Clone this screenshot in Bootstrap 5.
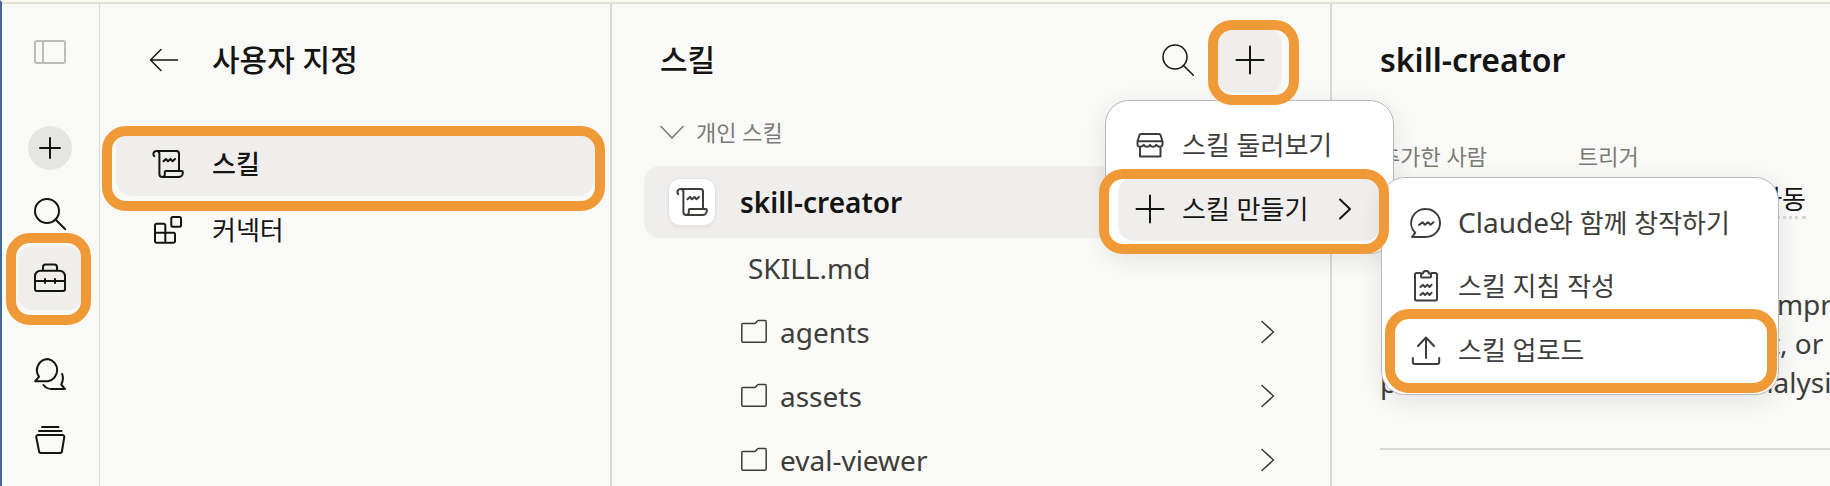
<!DOCTYPE html>
<html lang="ko">
<head>
<meta charset="utf-8">
<meta name="viewport" content="width=device-width, initial-scale=1">
<title>스킬 - 사용자 지정</title>
<link href="https://cdn.jsdelivr.net/npm/bootstrap@5.3.0/dist/css/bootstrap.min.css" rel="stylesheet">
<style>
  :root { --ink:#141413; --ink-soft:#3d3d3a; --ink-mute:#7b7a74; --line:#d8d8d6; --tint:#efeeec; --mark:#f09937; }
  body { font-family:"Noto Sans","Noto Sans CJK KR",sans-serif; font-size:26px; line-height:40px; color:var(--ink);
         background:#f9f9f7; overflow:hidden; }
  .app { border-left:2px solid #41699a; border-top:2px solid #f7f9ef; }
  .frame { border-top:2px solid #dfe3d8; min-height:0; }
  .glyph { width:32px; height:32px; fill:none; stroke:currentColor; stroke-width:2; stroke-linecap:round; stroke-linejoin:round; flex:none; display:block; }
  .thin { stroke-width:1.5; }
  button { font:inherit; color:inherit; }
  .plain { border:0; background:none; padding:0; }
  .latin { font-size:28px; }

  .rail { width:98px; border-right:1px solid var(--line); background:#f9faf6; padding:16px 1px 0 0; }
  .tile { width:64px; height:64px; border-radius:14px; position:relative; }
  .tile.on { background:var(--tint); }
  .disc { width:44px; height:44px; border-radius:50%; background:#e5e6e1; }
  .faint { color:#bcbcb8; }
  .break-lg { margin-top:32px; }
  .break-sm { margin-top:2px; }

  .settings { width:512px; border-right:2px solid var(--line); padding:0 16px; }
  .bar { height:112px; }
  .headline { font-size:30px; line-height:40px; font-weight:500; margin:0; }
  .headline.latin { font-size:32px; font-weight:600; }
  .entries { gap:2px; }
  .entry { height:64px; border-radius:16px; padding:0 36px; gap:28px; position:relative; color:var(--ink); text-decoration:none; }
  .entry.on { background:var(--tint); font-weight:500; }

  .skills { width:720px; border-right:2px solid var(--line); padding:0 32px; }
  .skills .bar { padding:0 16px; }
  .group { height:32px; padding:0 16px; gap:12px; font-size:22px; color:var(--ink-mute); margin-bottom:18px; }
  .group .glyph { width:24px; }
  .picked { height:72px; border-radius:16px; background:var(--tint); padding:0 24px; gap:24px; font-weight:600; }
  .chip { width:48px; height:48px; border-radius:12px; background:#fff; border:1px solid #e3e2df; box-shadow:0 2px 4px rgba(0,0,0,.05); color:var(--ink-soft); }
  .node { height:60px; padding:0 14px 0 96px; gap:12px; color:var(--ink-soft); }
  .node .folder { width:28px; height:28px; }
  .leaf { padding-left:104px; }

  .detail { padding:0 0 0 48px; min-width:0; }
  .meta { gap:16px; font-size:22px; line-height:32px; color:var(--ink-mute); white-space:nowrap; padding-top:24px; height:144px; }
  .meta dt { font-weight:400; width:182px; }
  .meta .wide { width:228px; }
  .meta dd { font-size:26px; line-height:34px; color:var(--ink); margin:10px 0 0; text-align:right; }
  .dotted { border-bottom:3px dotted var(--line); display:inline-block; }
  .about { line-height:39px; color:var(--ink-soft); white-space:nowrap; margin:0; padding:25px 0 46px; overflow:hidden; }
  .rule { height:2px; background:var(--line); }

  .pop { position:absolute; background:#fff; border:1px solid #b9b9b7; border-radius:24px; padding:12px; box-shadow:0 6px 24px rgba(0,0,0,.09); color:var(--ink-soft); font-size:26px; font-weight:400; margin:0; list-style:none; }
  .pop-main { top:72px; right:-112px; width:289px; z-index:10; }
  .pop-sub { top:0; left:263px; width:398px; z-index:11; }
  .choice { height:64px; width:100%; border-radius:16px; padding:0 16px; gap:16px; white-space:nowrap; }
  .choice.on { background:var(--tint); color:var(--ink); }

  /* orange markers laid over the steps to follow */
  .ring { position:absolute; border:10px solid var(--mark); border-radius:24px; pointer-events:none; z-index:20; }
  .ring-rail { inset:-13px -9px -15px -12px; }
  .ring-entry { inset:-6px -11px -15px -14px; }
  .ring-add { inset:-8px -17px -13px -10px; }
  .ring-make { inset:-8px -8px -13px -19px; }
  .ring-upload { inset:-9px -11px -11px -9px; }
</style>
</head>
<body>
<svg width="0" height="0" class="position-absolute" aria-hidden="true">
  <symbol id="scroll" viewBox="0 0 32 32"><path d="M2.200 8.200C.4 5.800 1.800 3 4.600 3H24.500a2.500 2.500 0 0 1 2.500 2.500V23M4.600 3C6.300 3 7.400 4.300 7.400 6V26a3 3 0 0 0 3 3H26.500a4.300 4.300 0 0 0 4.300-4.300V24a1 1 0 0 0-1-1H13.800a1 1 0 0 0-1 1V26.300c0 1.500-.9 2.700-2.400 2.700M11.500 13.300l2.500-2.300 2 2.300 2.500-2.300 2 2.300 2.500-2.300"/></symbol>
  <symbol id="search" viewBox="0 0 32 32"><circle cx="13" cy="13" r="12"/><path d="M21.500 21.500L31.300 31.200"/></symbol>
  <symbol id="plus" viewBox="0 0 32 32"><path d="M16 2.500v27M2.500 16h27"/></symbol>
  <symbol id="folder" viewBox="0 0 28 28"><path d="M3 5.500H14.500C16.500 5.500 16.500 2.500 18.500 2.500H25a1.200 1.200 0 0 1 1.200 1.200V23a1.200 1.200 0 0 1-1.200 1.200H3A1.200 1.200 0 0 1 1.800 23V6.700A1.200 1.200 0 0 1 3 5.500z"/></symbol>
  <symbol id="next" viewBox="0 0 32 32"><path d="M10 5.500L21.500 16 10 26.500"/></symbol>
</svg>

<div class="app d-flex flex-column vh-100">
<div class="frame d-flex flex-grow-1">
  <nav class="rail d-flex flex-column align-items-center flex-shrink-0" aria-label="주 메뉴">
    <button class="plain tile faint d-flex align-items-center justify-content-center" aria-label="사이드바"><svg class="glyph" viewBox="0 0 32 32"><path d="M3 5H29a2 2 0 0 1 2 2V25a2 2 0 0 1-2 2H3a2 2 0 0 1-2-2V7a2 2 0 0 1 2-2zM9 5V27"/></svg></button>
    <button class="plain tile break-lg d-flex align-items-center justify-content-center" aria-label="새로 만들기"><span class="disc d-flex align-items-center justify-content-center"><svg class="glyph" viewBox="0 0 32 32"><path d="M16 6v20M6 16h20"/></svg></span></button>
    <button class="plain tile break-sm d-flex align-items-center justify-content-center" aria-label="검색"><svg class="glyph"><use href="#search"/></svg></button>
    <button class="plain tile on d-flex align-items-center justify-content-center" aria-label="사용자 지정"><svg class="glyph" viewBox="0 0 32 32"><path d="M9 8.500V5a2.500 2.500 0 0 1 2.500-2.500h9A2.500 2.500 0 0 1 23 5V8.500M6.500 8.700h19A5.500 5.500 0 0 1 31 14.200V27a2 2 0 0 1-2 2H3a2 2 0 0 1-2-2V14.200A5.500 5.500 0 0 1 6.500 8.700zM1 19H31M11 17v4M21 17v4"/></svg><span class="ring ring-rail"></span></button>
    <button class="plain tile break-lg d-flex align-items-center justify-content-center" aria-label="채팅"><svg class="glyph" viewBox="0 0 32 32"><path d="M14 1A11.300 11.300 0 0 1 14 23.200H1.200L5 18.800A11.300 11.300 0 0 1 14 1zM9.500 27C11.500 29.500 14 31 17.500 31H31L27.200 26.500C29 23.500 29.400 19.500 28.200 16"/></svg></button>
    <button class="plain tile break-sm d-flex align-items-center justify-content-center" aria-label="프로젝트"><svg class="glyph" viewBox="0 0 32 32"><path d="M8 3H24.500M5 7H27.500M4 11H28.500A1.800 1.800 0 0 1 30.300 13L28 27a2 2 0 0 1-2 2H7a2 2 0 0 1-2-2L2.200 13A1.800 1.800 0 0 1 4 11z"/></svg></button>
  </nav>

  <section class="settings flex-shrink-0">
    <header class="bar d-flex align-items-center">
      <button class="plain ms-4 ps-2 me-4" aria-label="뒤로"><svg class="glyph thin" viewBox="0 0 32 32"><path d="M29.500 16H2.500M13 5.500L2.500 16 13 26.500"/></svg></button>
      <h1 class="headline ps-2">사용자 지정</h1>
    </header>
    <nav class="entries d-flex flex-column pt-3" aria-label="설정">
      <a href="#skills" class="entry on d-flex align-items-center"><svg class="glyph"><use href="#scroll"/></svg>스킬<span class="ring ring-entry"></span></a>
      <a href="#connectors" class="entry d-flex align-items-center"><svg class="glyph" viewBox="0 0 32 32"><rect x="19.300" y="3" width="9.700" height="9.700" rx="1.500"/><path d="M4.500 9.700H12A1.500 1.500 0 0 1 13.300 11V18.800H22A1.500 1.500 0 0 1 23 20V27.300A1.500 1.500 0 0 1 21.500 28.800H4.500A1.500 1.500 0 0 1 3 27.300V11.200A1.500 1.500 0 0 1 4.500 9.700zM3 18.800H13.300V28.800"/></svg>커넥터</a>
    </nav>
  </section>

  <section class="skills flex-shrink-0">
    <header class="bar d-flex align-items-center">
      <h2 class="headline me-auto">스킬</h2>
      <button class="plain me-4" aria-label="스킬 검색"><svg class="glyph thin"><use href="#search"/></svg></button>
      <div class="dropdown position-relative">
        <button class="plain tile on d-flex align-items-center justify-content-center" aria-label="스킬 추가" aria-expanded="true"><svg class="glyph"><use href="#plus"/></svg><span class="ring ring-add"></span></button>
        <ul class="pop pop-main">
          <li><button class="plain choice d-flex align-items-center"><svg class="glyph" viewBox="0 0 32 32"><path d="M7 5H25a2 2 0 0 1 1.500 1L28.500 12.500V15.500C28.500 18.300 23.800 18.600 22.200 15.800 21 18.500 17.200 18.500 16 15.800 14.800 18.500 11 18.500 9.800 15.800 8.200 18.600 3.500 18.300 3.500 15.500V12.500L5.500 6A2 2 0 0 1 7 5zM3.500 12.300H28.500M6 18V27.500H26.500V18"/></svg>스킬 둘러보기</button></li>
          <li class="position-relative"><button class="plain choice on d-flex align-items-center" aria-expanded="true"><svg class="glyph"><use href="#plus"/></svg>스킬 만들기<svg class="glyph ms-auto me-1" viewBox="0 0 32 32"><path d="M11 6.500L21 16 11 25.500"/></svg></button>
            <span class="ring ring-make"></span>
            <ul class="pop pop-sub">
              <li><button class="plain choice d-flex align-items-center"><svg class="glyph" viewBox="0 0 32 32"><path d="M16 3A14 14 0 0 1 16 31H2L5.200 26.800A14 14 0 0 1 16 3zM9 19l3.500-2.800 2.500 2.600 3-2.600 2.500 2.600 3-2.600"/></svg><span><span class="latin">Claude</span>와 함께 창작하기</span></button></li>
              <li><button class="plain choice d-flex align-items-center"><svg class="glyph" viewBox="0 0 32 32"><path d="M10 3H6.500A1.500 1.500 0 0 0 5 4.500V29A1.500 1.500 0 0 0 6.500 30.500H25.500A1.500 1.500 0 0 0 27 29V4.500A1.500 1.500 0 0 0 25.500 3H22M11 3.500H13C13 0 19 0 19 3.500H21V6.500A1 1 0 0 1 20 7.500H12A1 1 0 0 1 11 6.500zM10.500 17l2.500-2.200 2 2.200 2.500-2.200 2 2.200 2-2.200M10.500 25l2.500-2.200 2 2.200 2.500-2.200 2 2.200 2-2.200"/></svg>스킬 지침 작성</button></li>
              <li class="position-relative"><button class="plain choice d-flex align-items-center"><svg class="glyph" viewBox="0 0 32 32"><path d="M16 24V4M8 12L16 3.500 24 12M2.800 24V28a2 2 0 0 0 2 2H27.200a2 2 0 0 0 2-2V24"/></svg>스킬 업로드</button><span class="ring ring-upload"></span></li>
            </ul>
          </li>
        </ul>
      </div>
    </header>
    <button class="plain group d-flex align-items-center"><svg class="glyph thin" viewBox="0 0 24 32"><path d="M1 10.500L12 22 23 10.500"/></svg>개인 스킬</button>
    <div class="picked latin d-flex align-items-center"><span class="chip d-flex align-items-center justify-content-center"><svg class="glyph"><use href="#scroll"/></svg></span>skill-creator</div>
    <div class="latin d-flex flex-column gap-1">
      <div class="node leaf d-flex align-items-center">SKILL.md</div>
      <div class="node d-flex align-items-center"><svg class="glyph thin folder"><use href="#folder"/></svg>agents<svg class="glyph thin ms-auto"><use href="#next"/></svg></div>
      <div class="node d-flex align-items-center"><svg class="glyph thin folder"><use href="#folder"/></svg>assets<svg class="glyph thin ms-auto"><use href="#next"/></svg></div>
      <div class="node d-flex align-items-center"><svg class="glyph thin folder"><use href="#folder"/></svg>eval-viewer<svg class="glyph thin ms-auto"><use href="#next"/></svg></div>
    </div>
  </section>

  <main class="detail flex-grow-1">
    <header class="bar d-flex align-items-center"><h2 class="headline latin">skill-creator</h2></header>
    <dl class="meta d-flex mb-0">
      <div><dt>추가한 사람</dt></div>
      <div class="wide"><dt>트리거</dt><dd><span class="dotted">자동</span></dd></div>
    </dl>
    <p class="about latin">Create new skills, modify and improve existing skills<br>create a skill from scratch, edit, or optimize<br>performance with variance analysis</p>
    <div class="rule"></div>
  </main>
</div>
</div>
<script src="https://cdn.jsdelivr.net/npm/bootstrap@5.3.0/dist/js/bootstrap.bundle.min.js"></script>
</body>
</html>
